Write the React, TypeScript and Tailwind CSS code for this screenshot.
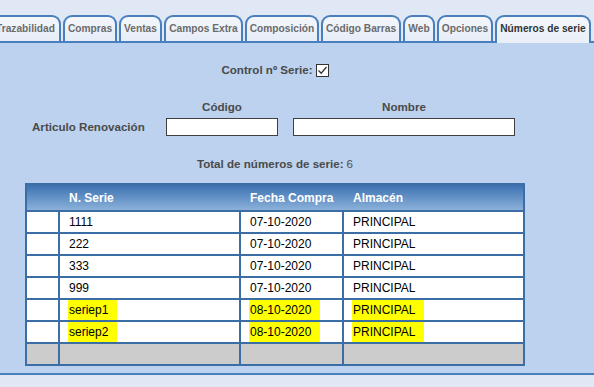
import React from "react";

const tabs = [
  { label: "Trazabilidad", w: 71 },
  { label: "Compras", w: 54 },
  { label: "Ventas", w: 43 },
  { label: "Campos Extra", w: 79 },
  { label: "Composición", w: 74 },
  { label: "Código Barras", w: 80 },
  { label: "Web", w: 32 },
  { label: "Opciones", w: 56 },
  { label: "Números de serie", w: 96, active: true },
];

const rows = [
  { s: "1111", f: "07-10-2020", a: "PRINCIPAL", hl: false },
  { s: "222", f: "07-10-2020", a: "PRINCIPAL", hl: false },
  { s: "333", f: "07-10-2020", a: "PRINCIPAL", hl: false },
  { s: "999", f: "07-10-2020", a: "PRINCIPAL", hl: false },
  { s: "seriep1", f: "08-10-2020", a: "PRINCIPAL", hl: true },
  { s: "seriep2", f: "08-10-2020", a: "PRINCIPAL", hl: true },
];

function Cell({ text, hl }: { text: string; hl: boolean }) {
  if (!hl) return <span>{text}</span>;
  return (
    <span className="bg-[#ffff00] ml-[-1px] pl-[1px] pr-[9px] py-[1px] rounded-[1px]">{text}</span>
  );
}

export default function App() {
  return (
    <div
      className="w-[594px] h-[387px] overflow-hidden bg-[#dfe8f4] flex flex-col"
      style={{ fontFamily: '"Liberation Sans", Arial, sans-serif' }}
    >
      <div className="h-[15px] shrink-0" />
      <div className="flex items-end h-[28px] shrink-0 border-b-2 border-[#4a7fbe] ml-[-10px] w-[604px]">
        {tabs.map((t) =>
          t.active ? (
            <div
              key={t.label}
              style={{ width: t.w }}
              className="h-[28px] mb-[-2px] mr-[2px] shrink-0 rounded-t-[9px] border-2 border-b-0 border-[#4a7fbe] bg-gradient-to-b from-[#f4f7fc] to-[#e9eff8] flex items-start pt-[4px] justify-center text-[10.2px] font-bold text-[#333333]"
            >
              {t.label}
            </div>
          ) : (
            <div
              key={t.label}
              style={{ width: t.w }}
              className="h-[26px] mr-[2px] shrink-0 rounded-t-[9px] border-2 border-b-0 border-[#4a7fbe] bg-gradient-to-b from-[#f4f7fc] to-[#e6edf7] flex items-center justify-center text-[10.2px] font-bold text-[#6b6b6b]"
            >
              {t.label}
            </div>
          )
        )}
      </div>
      <div className="h-[332px] shrink-0 bg-[#bcd2ee] border-b-2 border-[#4a7fbe]">
        <div className="ml-[25px] w-[500px] flex flex-col text-[#4a4a4a]">
          <div className="mt-[20px] h-[14px] flex items-center justify-center text-[11.6px] font-bold">
            <span>Control nº Serie:</span>
            <span className="ml-[3px] w-[13px] h-[13px] border border-[#333] bg-white flex items-center justify-center">
              <svg width="11" height="11" viewBox="0 0 11 11">
                <path d="M1.5 5.5 L4.2 8.2 L9.5 2" stroke="#333" strokeWidth="1.3" fill="none" />
              </svg>
            </span>
          </div>
          <div className="mt-[23px] h-[14px] flex items-center text-[11.6px] font-bold">
            <div className="w-[141px]" />
            <div className="w-[112px] text-center">Código</div>
            <div className="w-[15px]" />
            <div className="w-[222px] text-center">Nombre</div>
          </div>
          <div className="mt-[4px] h-[18px] flex items-center text-[11.6px] font-bold">
            <div className="w-[141px] pl-[7px]">Articulo Renovación</div>
            <div className="w-[112px] h-[18px] bg-white border border-[#404040]" />
            <div className="w-[15px]" />
            <div className="w-[222px] h-[18px] bg-white border border-[#404040]" />
          </div>
          <div className="mt-[21px] h-[14px] flex items-center justify-center text-[11.6px]">
            <span className="font-bold">Total de números de serie:</span>
            <span className="ml-[3px]">6</span>
          </div>
          <div className="mt-[12px] border-2 border-[#3a6ea5] bg-white text-[12px]">
            <div
              className="grid grid-cols-[31px_181px_103px_1fr] h-[25px] text-white font-bold"
              style={{ background: "linear-gradient(to bottom, #3b71b1, #8cb1da)" }}
            >
              <div />
              <div className="pl-[11px] flex items-center">N. Serie</div>
              <div className="pl-[11px] flex items-center">Fecha Compra</div>
              <div className="pl-[11px] flex items-center">Almacén</div>
            </div>
            {rows.map((r) => (
              <div key={r.s} className="grid grid-cols-[31px_181px_103px_1fr] h-[22px] border-t-2 border-[#3a6ea5] text-black">
                <div />
                <div className="border-l-2 border-[#3a6ea5] pl-[9px] flex items-center">
                  <Cell text={r.s} hl={r.hl} />
                </div>
                <div className="border-l-2 border-[#3a6ea5] pl-[9px] flex items-center">
                  <Cell text={r.f} hl={r.hl} />
                </div>
                <div className="border-l-2 border-[#3a6ea5] pl-[9px] flex items-center">
                  <Cell text={r.a} hl={r.hl} />
                </div>
              </div>
            ))}
            <div className="grid grid-cols-[31px_181px_103px_1fr] h-[22px] border-t-2 border-[#3a6ea5] bg-[#cccccc]">
              <div />
              <div className="border-l-2 border-[#3a6ea5]" />
              <div className="border-l-2 border-[#3a6ea5]" />
              <div className="border-l-2 border-[#3a6ea5]" />
            </div>
          </div>
        </div>
      </div>
    </div>
  );
}
